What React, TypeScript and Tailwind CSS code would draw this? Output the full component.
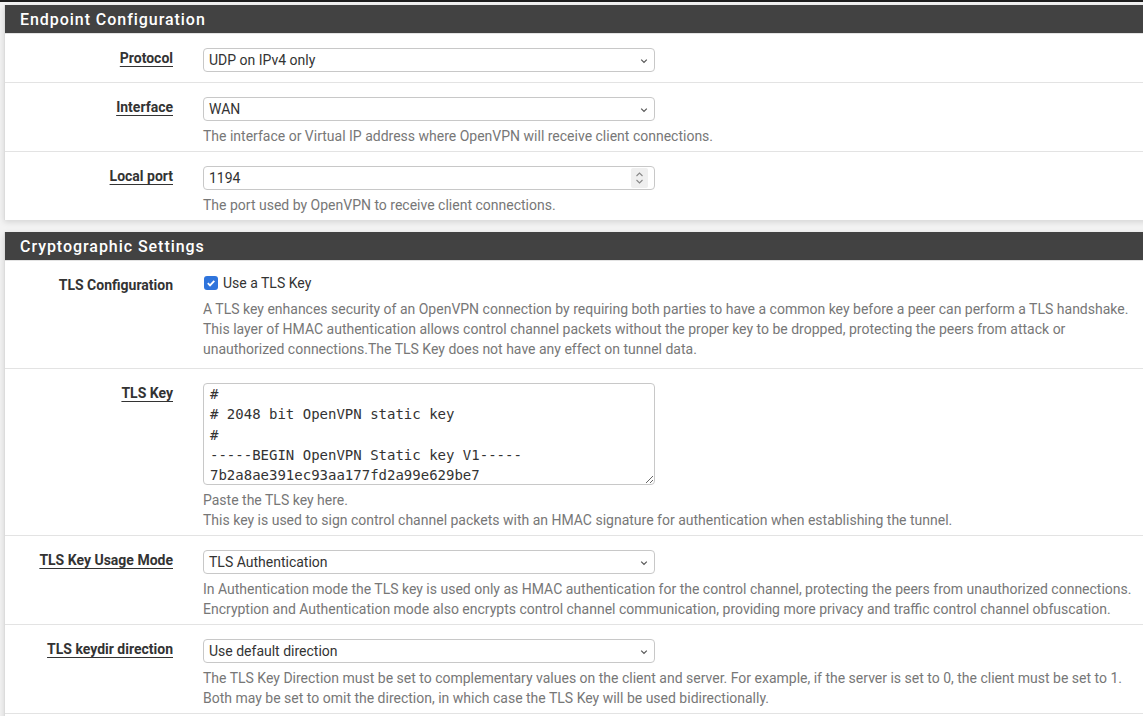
import React from "react";

const Chevron = () => (
  <svg width="10" height="10" viewBox="0 0 10 10" className="absolute right-[5px] top-[7px]">
    <path d="M2.2 3.6 L5 6.4 L7.8 3.6" fill="none" stroke="#555" strokeWidth="1.2" />
  </svg>
);

function Select({ value }: { value: string }) {
  return (
    <div className="relative w-[452px] h-[24px] mb-[5px] border border-[#c8c8c8] rounded-[4px] bg-white">
      <div className="pl-[5px] leading-[22px] text-[14px] text-[#333]">{value}</div>
      <Chevron />
    </div>
  );
}

function Row({
  label,
  underline = true,
  children,
  pt = "pt-[14px]",
  pb = "pb-[5px]",
}: {
  label: string;
  underline?: boolean;
  children: React.ReactNode;
  pt?: string;
  pb?: string;
}) {
  return (
    <div className="flex border-t border-[#e3e3e3]">
      <div className="w-[198px] shrink-0 pr-[30px] pt-[12px] text-right">
        <span
          className={
            "text-[14px] leading-[20px] font-bold text-[#333] " +
            (underline ? "underline underline-offset-[3px]" : "")
          }
        >
          {label}
        </span>
      </div>
      <div className={"flex-1 pr-[15px] " + pt + " " + pb}>{children}</div>
    </div>
  );
}

function Help({ lines }: { lines: string[] }) {
  return (
    <div className="text-[14px] leading-[20px] text-[#777] whitespace-nowrap">
      {lines.map((l, i) => (
        <div key={i}>{l}</div>
      ))}
    </div>
  );
}

function Panel({ title, children }: { title: string; children: React.ReactNode }) {
  return (
    <div className="bg-white border-l border-[#dcdcdc] shadow-[0_2px_6px_rgba(0,0,0,0.13)] mb-[12px]">
      <div className="h-[28px] bg-[#424242] px-[15px] pt-[1px] flex items-center text-white text-[16px] font-medium tracking-[0.95px]">
        {title}
      </div>
      {children}
    </div>
  );
}

const keyText = `#
# 2048 bit OpenVPN static key
#
-----BEGIN OpenVPN Static key V1-----
7b2a8ae391ec93aa177fd2a99e629be7`;

export default function App() {
  return (
    <div className="min-h-screen bg-[#f3f3f3] overflow-hidden font-['Roboto','Liberation_Sans',sans-serif]">
      <div className="h-[2px] bg-[#1e1e1e]" />
      <div className="pl-[4px] pt-[3px] w-[1190px]">
        <Panel title="Endpoint Configuration">
          <Row label="Protocol">
            <Select value="UDP on IPv4 only" />
          </Row>
          <Row label="Interface">
            <Select value="WAN" />
            <Help lines={["The interface or Virtual IP address where OpenVPN will receive client connections."]} />
          </Row>
          <Row label="Local port">
            <div className="relative w-[452px] h-[24px] mb-[5px] border border-[#c8c8c8] rounded-[4px] bg-white">
              <div className="pl-[5px] leading-[22px] text-[14px] text-[#333]">1194</div>
              <div className="absolute right-[6px] top-[1px] w-[17px] h-[20px] bg-[#efefef] rounded-[2px] flex flex-col items-center justify-center">
                <svg width="9" height="16" viewBox="0 0 9 16">
                  <path d="M1.5 6 L4.5 3 L7.5 6" fill="none" stroke="#888" strokeWidth="1.1" />
                  <path d="M1.5 10 L4.5 13 L7.5 10" fill="none" stroke="#888" strokeWidth="1.1" />
                </svg>
              </div>
            </div>
            <Help lines={["The port used by OpenVPN to receive client connections."]} />
          </Row>
        </Panel>

        <Panel title="Cryptographic Settings">
          <Row label="TLS Configuration" underline={false} pt="pt-[12px]" pb="pb-[9px]">
            <div className="flex items-center h-[20px] mb-[6px] pl-[1px]">
              <span className="w-[14px] h-[14px] rounded-[3px] bg-[#2f74dc] flex items-center justify-center">
                <svg width="10" height="10" viewBox="0 0 10 10">
                  <path d="M1.8 5.2 L4 7.4 L8.3 2.8" fill="none" stroke="white" strokeWidth="1.8" />
                </svg>
              </span>
              <span className="ml-[5px] text-[14px] text-[#333]">Use a TLS Key</span>
            </div>
            <Help
              lines={[
                "A TLS key enhances security of an OpenVPN connection by requiring both parties to have a common key before a peer can perform a TLS handshake.",
                "This layer of HMAC authentication allows control channel packets without the proper key to be dropped, protecting the peers from attack or",
                "unauthorized connections.The TLS Key does not have any effect on tunnel data.",
              ]}
            />
          </Row>
          <Row label="TLS Key">
            <textarea
              readOnly
              value={keyText}
              className="block w-[452px] h-[102px] mb-[5px] border border-[#c8c8c8] rounded-[4px] bg-white px-[6px] pt-0 font-['DejaVu_Sans_Mono',monospace] text-[14px] leading-[20.3px] text-[#333] overflow-hidden outline-none"
            />
            <Help
              lines={[
                "Paste the TLS key here.",
                "This key is used to sign control channel packets with an HMAC signature for authentication when establishing the tunnel.",
              ]}
            />
          </Row>
          <Row label="TLS Key Usage Mode">
            <Select value="TLS Authentication" />
            <Help
              lines={[
                "In Authentication mode the TLS key is used only as HMAC authentication for the control channel, protecting the peers from unauthorized connections.",
                "Encryption and Authentication mode also encrypts control channel communication, providing more privacy and traffic control channel obfuscation.",
              ]}
            />
          </Row>
          <Row label="TLS keydir direction">
            <Select value="Use default direction" />
            <Help
              lines={[
                "The TLS Key Direction must be set to complementary values on the client and server. For example, if the server is set to 0, the client must be set to 1.",
                "Both may be set to omit the direction, in which case the TLS Key will be used bidirectionally.",
              ]}
            />
          </Row>
          <div className="border-t border-[#e3e3e3] h-[20px]" />
        </Panel>
      </div>
    </div>
  );
}
